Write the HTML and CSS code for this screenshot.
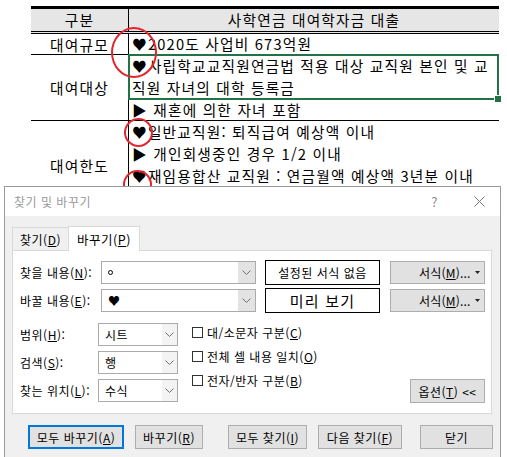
FILE: index.html
```html
<!DOCTYPE html>
<html lang="ko">
<head>
  <meta charset="UTF-8">
  <title>찾기 및 바꾸기</title>
  <link rel="stylesheet" href="styles.css">
</head>
<body>
  <div class="sheet">
    <div class="loan">
      <div class="loan-head">
        <div class="cell-label">구분</div>
        <div class="head-title">사학연금 대여학자금 대출</div>
      </div>
      <div class="loan-row row-scale">
        <div class="cell-label">대여규모</div>
        <div class="cell-text">
          <div class="line">♥2020도 사업비 673억원</div>
        </div>
      </div>
      <div class="loan-row row-target">
        <div class="cell-label">대여대상</div>
        <div class="cell-text">
          <div class="selected">
            <div class="line">♥사립학교교직원연금법 적용 대상 교직원 본인 및 교</div>
            <div class="line">직원 자녀의 대학 등록금</div>
          </div>
          <div class="line short">▶ 재혼에 의한 자녀 포함</div>
        </div>
      </div>
      <div class="loan-row">
        <div class="cell-label">대여한도</div>
        <div class="cell-text">
          <div class="line">♥일반교직원: 퇴직급여 예상액 이내</div>
          <div class="line">▶ 개인회생중인 경우 1/2 이내</div>
          <div class="line">♥재임용합산 교직원 : 연금월액 예상액 3년분 이내</div>
          <div class="line">&nbsp;</div>
        </div>
      </div>
    </div>

    <span class="mark mark-1"></span>
    <span class="mark mark-2"></span>
    <span class="mark mark-3"></span>

    <div class="dialog">
      <div class="titlebar">
        <span>찾기 및 바꾸기</span>
        <span class="help">?</span>
        <svg class="close" width="11" height="11" viewBox="0 0 11 11"><path d="M0.5 0.5L10.5 10.5M10.5 0.5L0.5 10.5" stroke="#7a7a7a" stroke-width="1" fill="none"/></svg>
      </div>

      <div class="tabs">
        <div class="tab">찾기(<u>D</u>)</div>
        <div class="tab active">바꾸기(<u>P</u>)</div>
      </div>

      <div class="panel">
        <div class="find-row">
          <label class="lbl">찾을 내용(<u>N</u>):</label>
          <div class="combo wide">
            <span class="combo-value"><span class="ring"></span></span>
            <span class="combo-drop"><svg width="9" height="5" viewBox="0 0 9 5"><path d="M0.5 0.5L4.5 4.5L8.5 0.5" fill="none" stroke="#707070"/></svg></span>
          </div>
          <div class="fmt-box">설정된 서식 없음</div>
          <div class="btn fmt-btn">서식(<u>M</u>)... <svg class="caret" width="5" height="3" viewBox="0 0 5 3"><path d="M0 0H5L2.5 3Z" fill="#222"/></svg></div>
        </div>
        <div class="find-row">
          <label class="lbl">바꿀 내용(<u>E</u>):</label>
          <div class="combo wide">
            <span class="combo-value">♥</span>
            <span class="combo-drop"><svg width="9" height="5" viewBox="0 0 9 5"><path d="M0.5 0.5L4.5 4.5L8.5 0.5" fill="none" stroke="#707070"/></svg></span>
          </div>
          <div class="fmt-box preview">미리 보기</div>
          <div class="btn fmt-btn">서식(<u>M</u>)... <svg class="caret" width="5" height="3" viewBox="0 0 5 3"><path d="M0 0H5L2.5 3Z" fill="#222"/></svg></div>
        </div>

        <div class="options">
          <div class="opt-grid">
            <label class="lbl">범위(<u>H</u>):</label>
            <div class="combo small">
              <span class="combo-value">시트</span>
              <span class="combo-drop light"><svg width="9" height="5" viewBox="0 0 9 5"><path d="M0.5 0.5L4.5 4.5L8.5 0.5" fill="none" stroke="#707070"/></svg></span>
            </div>
            <label class="lbl">검색(<u>S</u>):</label>
            <div class="combo small">
              <span class="combo-value">행</span>
              <span class="combo-drop light"><svg width="9" height="5" viewBox="0 0 9 5"><path d="M0.5 0.5L4.5 4.5L8.5 0.5" fill="none" stroke="#707070"/></svg></span>
            </div>
            <label class="lbl">찾는 위치(<u>L</u>):</label>
            <div class="combo small">
              <span class="combo-value">수식</span>
              <span class="combo-drop light"><svg width="9" height="5" viewBox="0 0 9 5"><path d="M0.5 0.5L4.5 4.5L8.5 0.5" fill="none" stroke="#707070"/></svg></span>
            </div>
          </div>
          <div class="checks">
            <div class="check"><span class="box"></span>대/소문자 구분(<u>C</u>)</div>
            <div class="check"><span class="box"></span>전체 셀 내용 일치(<u>O</u>)</div>
            <div class="check"><span class="box"></span>전자/반자 구분(<u>B</u>)</div>
          </div>
          <div class="btn opt-btn">옵션(<u>T</u>) &lt;&lt;</div>
        </div>
      </div>

      <div class="actions">
        <div class="btn default w-all">모두 바꾸기(<u>A</u>)</div>
        <div class="btn w-one">바꾸기(<u>R</u>)</div>
        <div class="btn w-findall">모두 찾기(<u>I</u>)</div>
        <div class="btn w-next">다음 찾기(<u>F</u>)</div>
        <div class="btn w-close">닫기</div>
      </div>
    </div>
  </div>
</body>
</html>
```

FILE: styles.css
```css
* {
  box-sizing: border-box;
}

html, body {
  margin: 0;
  height: 100%;
  overflow: hidden;
  background: #fff;
}

body {
  font-family: "Noto Sans CJK KR", "Noto Sans", sans-serif;
  color: #000;
}

.sheet {
  position: relative;
  height: 457px;
  padding: 6px 0 0 31px;
}

/* excel table */

.loan {
  width: 468px;
  border-top: 3px solid #000;
  font-size: 14.7px;
  letter-spacing: 1.2px;
}

.loan-head, .loan-row {
  display: grid;
  grid-template-columns: 98px 1fr;
}

.loan-head {
  height: 25px;
  background: #e7e6e6;
  border-bottom: 3px double #000;
  line-height: 22px;
}

.head-title {
  text-align: center;
}

.loan-row {
  border-bottom: 1px solid #000;
}

.row-scale {
  height: 21px;
}

.row-scale .line {
  height: 20px;
  line-height: 20px;
}

.row-target {
  height: 66px;
}

.cell-label {
  border-right: 1px solid #000;
  display: flex;
  align-items: center;
  justify-content: center;
}

.cell-text {
  white-space: nowrap;
}

.line {
  height: 22px;
  line-height: 22px;
  padding-left: 3px;
}

.line.short {
  height: 21px;
  line-height: 21px;
}

.selected {
  position: relative;
}

.selected::after {
  content: "";
  position: absolute;
  left: -1px;
  top: -1px;
  right: 0;
  bottom: -1px;
  border: 2px solid #217346;
}

.selected::before {
  content: "";
  position: absolute;
  right: -3px;
  bottom: -4px;
  width: 6px;
  height: 6px;
  background: #217346;
  border: 1px solid #fff;
  z-index: 1;
}

.mark {
  position: absolute;
  border: 2px solid #e3262d;
  border-radius: 50%;
}

.mark-1 {
  left: 111px;
  top: 27px;
  width: 46px;
  height: 51px;
}

.mark-2 {
  left: 124px;
  top: 118px;
  width: 29px;
  height: 29px;
}

.mark-3 {
  left: 123px;
  top: 170px;
  width: 29px;
  height: 29px;
}

/* dialog */

.dialog {
  position: absolute;
  left: 4px;
  top: 186px;
  width: 497px;
  height: 300px;
  background: #f0f0f0;
  border: 1px solid #9b9b9b;
  font-size: 12px;
  letter-spacing: 0.5px;
  color: #000;
}

.titlebar {
  height: 29px;
  background: #fff;
  display: flex;
  align-items: center;
  padding-left: 9px;
  color: #9a9a9a;
}

.help {
  margin-left: auto;
  color: #8a8a8a;
  font-size: 13px;
}

.close {
  margin: 0 15px 0 36px;
}

.tabs {
  display: flex;
  align-items: flex-end;
  margin: 9px 0 0 7px;
  height: 25px;
}

.tab {
  width: 56px;
  height: 23px;
  border: 1px solid #d9d9d9;
  border-right: none;
  border-bottom: none;
  display: flex;
  align-items: center;
  justify-content: center;
  padding-top: 1px;
}

.tab.active {
  position: relative;
  width: 72px;
  height: 25px;
  margin-bottom: -1px;
  background: #fff;
  border-right: 1px solid #d9d9d9;
  font-size: 12.5px;
}

.panel {
  margin-left: 7px;
  width: 480px;
  height: 164px;
  background: #fff;
  border: 1px solid #d9d9d9;
  padding: 9px 0 0 7px;
}

.find-row {
  display: flex;
  align-items: center;
  height: 24px;
  margin-bottom: 4px;
}

.lbl {
  white-space: nowrap;
}

.find-row .lbl {
  width: 81px;
}

.combo {
  display: flex;
  align-items: stretch;
  background: #fff;
  border: 1px solid #ababab;
}

.combo.wide {
  width: 155px;
  height: 23px;
}

.combo.small {
  width: 80px;
  height: 23px;
}

.combo-value {
  flex: 1;
  padding-left: 6px;
  line-height: 21px;
  display: flex;
  align-items: center;
}

.ring {
  width: 5px;
  height: 5px;
  border: 1px solid #000;
  border-radius: 50%;
}

.combo-drop {
  width: 17px;
  background: #e3e3e3;
  display: flex;
  align-items: center;
  justify-content: center;
}

.combo-drop.light {
  width: 15px;
  background: #f3f3f3;
}

.fmt-box {
  margin-left: 9px;
  width: 115px;
  height: 25px;
  border: 1px solid #000;
  display: flex;
  align-items: center;
  justify-content: center;
  background: #fff;
}

.fmt-box.preview {
  font-size: 15px;
  letter-spacing: 1.2px;
}

.btn {
  background: #e1e1e1;
  border: 1px solid #adadad;
  display: flex;
  align-items: center;
  justify-content: center;
  white-space: nowrap;
}

.fmt-btn {
  margin-left: 10px;
  width: 95px;
  height: 23px;
  justify-content: flex-start;
  padding-left: 28px;
  letter-spacing: 0.2px;
}

.caret {
  margin-left: 4px;
}

.options {
  display: flex;
  margin-top: 9px;
}

.opt-grid {
  display: grid;
  grid-template-columns: 78px 80px;
  grid-auto-rows: 23px;
  row-gap: 5px;
  align-items: center;
  margin-top: 2px;
}

.checks {
  margin-left: 14px;
  display: flex;
  flex-direction: column;
  gap: 2px;
}

.check {
  height: 22px;
  display: flex;
  align-items: center;
}

.box {
  width: 11px;
  height: 11px;
  border: 1px solid #333;
  background: #fff;
  margin-right: 4px;
}

.opt-btn {
  margin: 58px 6px 0 auto;
  width: 75px;
  height: 24px;
}

.actions {
  display: flex;
  margin: 11px 0 0 23px;
}

.actions .btn {
  height: 24px;
}

.btn.default {
  border: 2px solid #0078d7;
}

.w-all {
  width: 96px;
}

.w-one {
  width: 68px;
  margin-left: 11px;
}

.w-findall {
  width: 79px;
  margin-left: 25px;
}

.w-next {
  width: 84px;
  margin-left: 11px;
}

.w-close {
  width: 73px;
  margin-left: 18px;
}
```
